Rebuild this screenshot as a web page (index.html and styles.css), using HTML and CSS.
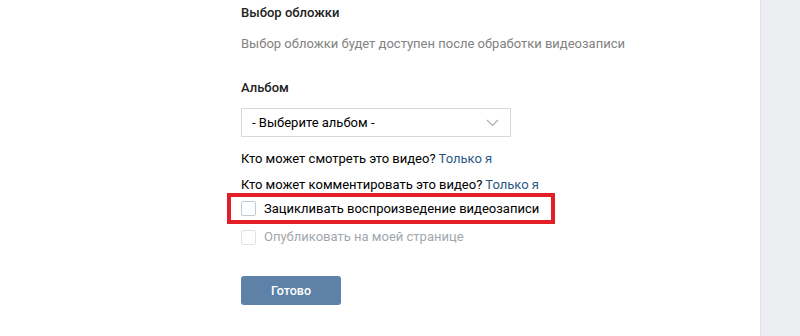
FILE: index.html
```html
<!DOCTYPE html>
<html lang="ru">
<head>
<meta charset="utf-8">
<link rel="stylesheet" href="styles.css">
</head>
<body>
<div class="page">
  <main class="content">
    <section class="block">
      <div class="label">Выбор обложки</div>
      <div class="hint">Выбор обложки будет доступен после обработки видеозаписи</div>
    </section>
    <section class="block album">
      <div class="label">Альбом</div>
      <div class="select">
        <span>- Выберите альбом -</span>
        <svg class="chev" width="13" height="8" viewBox="0 0 13 8"><path d="M1 1l5.5 5.5L12 1" fill="none" stroke="#a6aeb8" stroke-width="1.2"/></svg>
      </div>
    </section>
    <div class="privacy">Кто может смотреть это видео? <a class="link">Только я</a></div>
    <div class="privacy second">Кто может комментировать это видео? <a class="link">Только я</a></div>
    <div class="highlight">
      <label class="check"><span class="box"></span><span>Зацикливать воспроизведение видеозаписи</span></label>
    </div>
    <label class="check disabled"><span class="box"></span><span>Опубликовать на моей странице</span></label>
    <button class="btn">Готово</button>
  </main>
  <aside class="side"></aside>
</div>
</body>
</html>
```
FILE: styles.css
```css
html, body {
  margin: 0;
  padding: 0;
  background: #fff;
}
body {
  font-family: Roboto, "Open Sans", Arial, sans-serif;
  font-size: 13px;
  color: #000;
}
.page {
  display: flex;
  height: 336px;
  overflow: hidden;
}
.content {
  flex: 1;
  padding-left: 241px;
  padding-top: 4px;
}
.side {
  width: 39px;
  background: #ebedf0;
  border-left: 1px solid #e1e3e6;
}
.label {
  font-weight: 500;
  color: #222;
  line-height: 18px;
}
.hint {
  margin-top: 13px;
  color: #828282;
  line-height: 18px;
}
.album {
  margin-top: 26px;
}
.select {
  margin-top: 11px;
  width: 247px;
  height: 27px;
  border: 1px solid #d3d9de;
  display: flex;
  align-items: center;
  justify-content: space-between;
  padding: 0 11px 0 10px;
  color: #000;
}
.chev { margin-top: 1px; }
.privacy {
  margin-top: 13px;
  line-height: 18px;
}
.privacy.second {
  margin-top: 8px;
}
.link {
  color: #2a5885;
  text-decoration: none;
}
.highlight {
  margin-top: -1px;
  margin-left: -14px;
  width: 310px;
  height: 23px;
  border: 4px solid #e21e26;
  padding-left: 10px;
  display: flex;
  align-items: center;
}
.check {
  display: flex;
  align-items: center;
  line-height: 18px;
}
.box {
  width: 13px;
  height: 13px;
  border: 1px solid #c1c9d1;
  border-radius: 2px;
  margin-right: 8px;
  background: #fff;
}
.check.disabled {
  margin-top: 4px;
  color: #a2a7ad;
}
.check.disabled .box {
  border-color: #dfe3e7;
}
.btn {
  display: block;
  margin-top: 30px;
  width: 100px;
  height: 29px;
  background: #5e81a8;
  color: #fff;
  border: 0;
  border-radius: 3px;
  font-family: inherit;
  font-size: 12.5px;
  font-weight: 500;
  padding: 0;
}
```
